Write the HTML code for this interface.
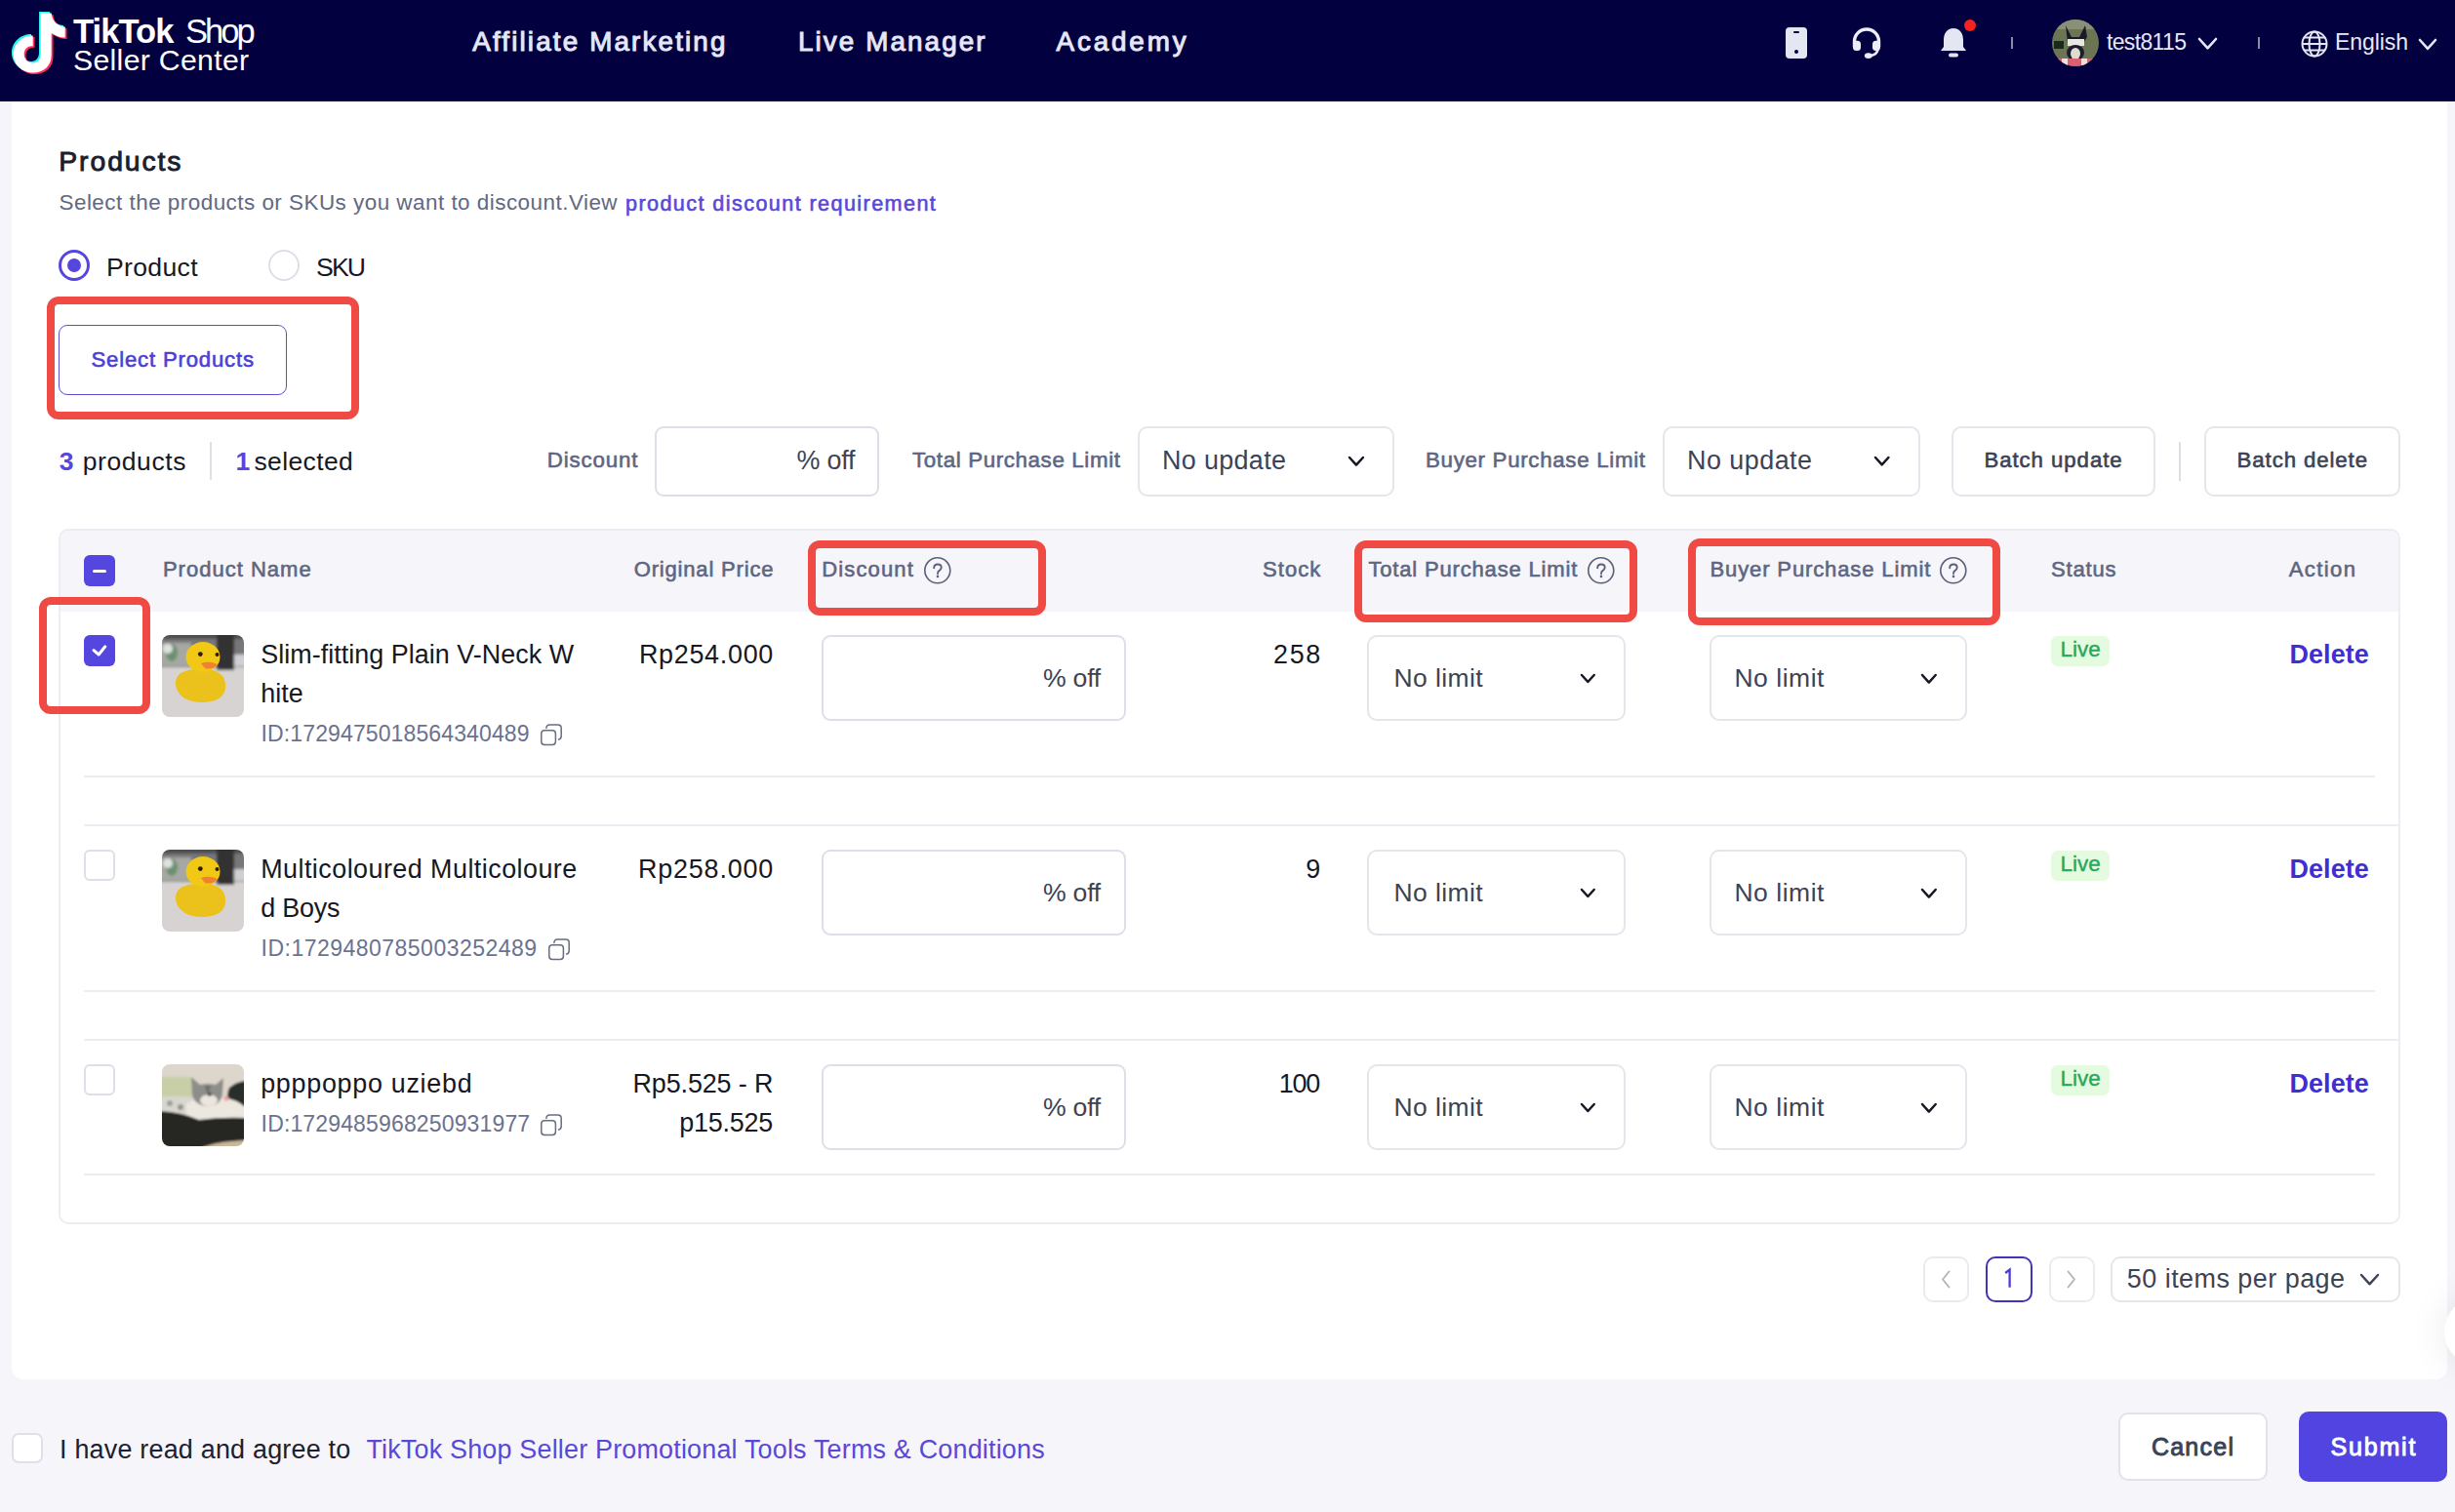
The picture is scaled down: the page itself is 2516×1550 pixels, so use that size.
<!DOCTYPE html>
<html><head><meta charset="utf-8">
<style>
html,body{margin:0;padding:0;}
body{width:2516px;height:1550px;overflow:hidden;background:#f6f6fa;position:relative;font-family:"Liberation Sans",sans-serif;}
.a{position:absolute;box-sizing:border-box;}
.t{position:absolute;white-space:pre;}
.hdr{left:0;top:0;width:2516px;height:104px;background:#03003f;}
.card{left:12px;top:104px;width:2496px;height:1310px;background:#fff;border-radius:0 0 12px 12px;}
.redbox{border:8px solid #f04a44;border-radius:12px;}
.inp{border:2px solid #dcdfe8;border-radius:9px;background:#fff;}
.sel{border:2px solid #e4e6ec;border-radius:10px;background:#fff;}
.btn{border:2px solid #e4e6ec;border-radius:10px;background:#fff;}
.div{background:#ebedf2;height:2px;}
.cb{width:32px;height:32px;border:2px solid #dcdfe8;border-radius:6px;background:#fff;}
.cbon{width:32px;height:32px;border-radius:6px;background:#5546e0;}
.img{width:84px;height:84px;border-radius:8px;overflow:hidden;}
</style></head><body>
<div class="a hdr"></div>
<div class="a card"></div>
<svg class="a" style="left:8px;top:10px" width="62" height="70" viewBox="0 0 62 70">
<g transform="translate(2,2)">
<path d="M30 0 H41 C41.5 7 46 13 55 14 V25 C49 25 45 23 41 20.5 V43 C41 54 33 61 22 61 C11 61 2 53 2 42 C2 31 11 23 22 23 V34 C17 33 13 37 13 42 C13 47 17 51 22 51 C27 51 30 47 30 42 Z" fill="#25f4ee"/>
</g>
<g transform="translate(5.5,5)">
<path d="M30 0 H41 C41.5 7 46 13 55 14 V25 C49 25 45 23 41 20.5 V43 C41 54 33 61 22 61 C11 61 2 53 2 42 C2 31 11 23 22 23 V34 C17 33 13 37 13 42 C13 47 17 51 22 51 C27 51 30 47 30 42 Z" fill="#fe2c55"/>
</g>
<g transform="translate(3.7,3.5)">
<path d="M30 0 H41 C41.5 7 46 13 55 14 V25 C49 25 45 23 41 20.5 V43 C41 54 33 61 22 61 C11 61 2 53 2 42 C2 31 11 23 22 23 V34 C17 33 13 37 13 42 C13 47 17 51 22 51 C27 51 30 47 30 42 Z" fill="#ffffff"/>
</g></svg>
<div class="a " style="left:1830px;top:28px;width:22px;height:32px;background:#e4e6f2;border-radius:4px;"></div>
<div class="a " style="left:1838px;top:32px;width:6px;height:2px;background:#03003f;border-radius:1px;"></div>
<div class="a " style="left:1839px;top:51px;width:4px;height:4px;background:#03003f;border-radius:50%;"></div>
<svg class="a" style="left:1897px;top:26px" width="32" height="36" viewBox="0 0 32 36">
<path d="M3.5 22 V16.5 A12.5 12.5 0 0 1 28.5 16.5 V22" fill="none" stroke="#ecedf8" stroke-width="3.4"/>
<rect x="2" y="15.7" width="8" height="10.4" rx="3.5" fill="#ecedf8"/>
<rect x="22" y="15.7" width="8" height="10.4" rx="3.5" fill="#ecedf8"/>
<path d="M27.5 24 Q27.5 30 19 31.2" fill="none" stroke="#ecedf8" stroke-width="2.6"/>
<ellipse cx="17.8" cy="31.1" rx="4" ry="2.9" fill="#ecedf8"/>
</svg>
<svg class="a" style="left:1986px;top:26px" width="32" height="36" viewBox="0 0 32 36">
<path d="M16 3 C9 3 6 9 6 15 V22 L3 26 H29 L26 22 V15 C26 9 23 3 16 3 Z" fill="#e4e6f2"/>
<rect x="11" y="28.5" width="10" height="4" rx="2" fill="#e4e6f2"/>
</svg>
<div class="a " style="left:2013px;top:20px;width:12px;height:12px;background:#f52222;border-radius:50%;"></div>
<div class="a " style="left:2061px;top:38px;width:2px;height:12px;background:#8b8ba8;"></div>
<div class="a " style="left:2314px;top:38px;width:2px;height:12px;background:#8b8ba8;"></div>
<svg class="a" style="left:2103px;top:20px" width="48" height="48" viewBox="0 0 48 48">
<defs><clipPath id="av"><circle cx="24" cy="24" r="24"/></clipPath></defs>
<g clip-path="url(#av)">
<rect width="48" height="48" fill="#6b7553"/>
<rect x="0" y="0" width="48" height="10" fill="#8a9078"/>
<path d="M14 6 L20 18 L28 18 L34 6 L36 18 L32 24 L16 24 Z" fill="#1a1a2a"/>
<rect x="2" y="22" width="10" height="8" fill="#1a2a1a"/>
<rect x="16" y="20" width="17" height="7" fill="#e8e8e0"/>
<ellipse cx="24" cy="34" rx="9" ry="8" fill="#1c1c30"/>
<ellipse cx="24" cy="35" rx="5" ry="6" fill="#e0dccd"/>
<rect x="0" y="40" width="48" height="8" fill="#d86070"/>
<rect x="10" y="40" width="6" height="8" fill="#f0e0e0"/>
<rect x="30" y="40" width="6" height="8" fill="#f0e0e0"/>
</g></svg>
<svg class="a" style="left:2251px;top:37.325px" width="23" height="15.350000000000001"><polyline points="3,3 11.5,12.350000000000001 20,3" fill="none" stroke="#e6e8f7" stroke-width="2.6" stroke-linecap="round" stroke-linejoin="round"/></svg>
<svg class="a" style="left:2357px;top:30px" width="30" height="30" viewBox="0 0 30 30">
<g fill="none" stroke="#e4e6f2" stroke-width="2">
<circle cx="15" cy="15" r="12.5"/><ellipse cx="15" cy="15" rx="5.5" ry="12.5"/>
<line x1="2.5" y1="15" x2="27.5" y2="15"/><path d="M4.5 8.5 H25.5 M4.5 21.5 H25.5"/>
</g></svg>
<svg class="a" style="left:2477px;top:37.6px" width="22" height="14.8"><polyline points="3,3 11.0,11.8 19,3" fill="none" stroke="#e6e8f7" stroke-width="2.6" stroke-linecap="round" stroke-linejoin="round"/></svg>
<div class="a " style="left:60px;top:256px;width:32px;height:32px;border:3px solid #5546e0;border-radius:50%;"></div>
<div class="a " style="left:69px;top:265px;width:14px;height:14px;background:#5546e0;border-radius:50%;"></div>
<div class="a " style="left:275px;top:256px;width:32px;height:32px;border:2px solid #dcdfe8;border-radius:50%;"></div>
<div class="a redbox" style="left:48px;top:304px;width:320px;height:126px;"></div>
<div class="a " style="left:60px;top:333px;width:234px;height:72px;border:1.5px solid #5b4fcf;border-radius:9px;"></div>
<div class="a " style="left:215px;top:453px;width:2px;height:39px;background:#dcdfe6;"></div>
<div class="a inp" style="left:671px;top:437px;width:230px;height:72px;"></div>
<div class="a sel" style="left:1166px;top:437px;width:263px;height:72px;"></div>
<svg class="a" style="left:1380.3px;top:466.17749999999995px" width="19.90000000000009" height="13.64500000000005"><polyline points="3,3 9.950000000000045,10.64500000000005 16.90000000000009,3" fill="none" stroke="#161823" stroke-width="2.5" stroke-linecap="round" stroke-linejoin="round"/></svg>
<div class="a sel" style="left:1704px;top:437px;width:264px;height:72px;"></div>
<svg class="a" style="left:1919.3px;top:466.315px" width="19.40000000000009" height="13.37000000000005"><polyline points="3,3 9.700000000000045,10.37000000000005 16.40000000000009,3" fill="none" stroke="#161823" stroke-width="2.5" stroke-linecap="round" stroke-linejoin="round"/></svg>
<div class="a btn" style="left:2000px;top:437px;width:209px;height:72px;"></div>
<div class="a " style="left:2233px;top:453px;width:2px;height:40px;background:#dcdfe6;"></div>
<div class="a btn" style="left:2259px;top:437px;width:201px;height:72px;"></div>
<div class="a " style="left:60px;top:542px;width:2400px;height:713px;border:2px solid #ebedf2;border-radius:10px;overflow:hidden;"></div>
<div class="a " style="left:62px;top:544px;width:2396px;height:83px;background:#f5f5fa;border-radius:8px 8px 0 0;"></div>
<div class="a cbon" style="left:86px;top:569px;width:32px;height:32px;"></div>
<div class="a " style="left:95px;top:583.5px;width:14px;height:3.0px;background:#fff;border-radius:2px;"></div>
<svg class="a" style="left:945.2px;top:569.0px" width="31.6" height="31.6" viewBox="-15.8 -15.8 31.6 31.6"><circle cx="0" cy="0" r="13.0" fill="none" stroke="#5a6078" stroke-width="1.6"/><path d="M-3.6 -2.6 Q-3.6 -6.3 0.2 -6.3 Q3.9 -6.3 3.9 -3.1 Q3.9 -1.1 1.6 0.3 Q0.2 1.2 0.2 3.2" fill="none" stroke="#5a6078" stroke-width="1.9" stroke-linecap="round"/><circle cx="0.2" cy="6.1" r="1.3" fill="#5a6078"/></svg>
<svg class="a" style="left:1625.2px;top:569.2px" width="31.6" height="31.6" viewBox="-15.8 -15.8 31.6 31.6"><circle cx="0" cy="0" r="13.0" fill="none" stroke="#5a6078" stroke-width="1.6"/><path d="M-3.6 -2.6 Q-3.6 -6.3 0.2 -6.3 Q3.9 -6.3 3.9 -3.1 Q3.9 -1.1 1.6 0.3 Q0.2 1.2 0.2 3.2" fill="none" stroke="#5a6078" stroke-width="1.9" stroke-linecap="round"/><circle cx="0.2" cy="6.1" r="1.3" fill="#5a6078"/></svg>
<svg class="a" style="left:1986.2px;top:569.2px" width="31.6" height="31.6" viewBox="-15.8 -15.8 31.6 31.6"><circle cx="0" cy="0" r="13.0" fill="none" stroke="#5a6078" stroke-width="1.6"/><path d="M-3.6 -2.6 Q-3.6 -6.3 0.2 -6.3 Q3.9 -6.3 3.9 -3.1 Q3.9 -1.1 1.6 0.3 Q0.2 1.2 0.2 3.2" fill="none" stroke="#5a6078" stroke-width="1.9" stroke-linecap="round"/><circle cx="0.2" cy="6.1" r="1.3" fill="#5a6078"/></svg>
<div class="a cbon" style="left:86px;top:651px;width:32px;height:32px;"></div>
<svg class="a" style="left:86px;top:651px" width="32" height="32"><polyline points="10,15.6 15.2,20 21.8,11.8" fill="none" stroke="#fff" stroke-width="3" stroke-linecap="round" stroke-linejoin="round"/></svg>
<svg class="a" style="left:166px;top:651px" width="84" height="84" viewBox="0 0 84 84"><defs><clipPath id="cd0"><rect width="84" height="84" rx="8"/></clipPath><filter id="fd0" x="-10%" y="-10%" width="120%" height="120%"><feGaussianBlur stdDeviation="1.6"/></filter><filter id="fe0" x="-10%" y="-10%" width="120%" height="120%"><feGaussianBlur stdDeviation="0.5"/></filter></defs><g clip-path="url(#cd0)"><g filter="url(#fd0)"><rect x="-4" y="-4" width="92" height="92" fill="#d8d3d3"/><rect x="-4" y="-4" width="92" height="37" fill="#77777a"/><rect x="-4" y="-4" width="92" height="8" fill="#4e4e50"/><rect x="-4" y="8" width="34" height="24" fill="#a6a8a3"/><ellipse cx="10" cy="18" rx="6" ry="9" fill="#6a9070"/><ellipse cx="6" cy="14" rx="5" ry="5" fill="#e0e2e0"/><rect x="56" y="-4" width="18" height="40" fill="#313133"/><rect x="74" y="20" width="12" height="12" fill="#d0d0d4"/></g><g filter="url(#fe0)"><path d="M14 52 Q13 40 24 37 Q30 34 36 36 L52 36 Q66 40 65 54 Q64 68 42 69 Q18 69 14 52 Z" fill="#ebc21e"/><ellipse cx="42" cy="22.5" rx="17.5" ry="15.5" fill="#f1c812"/><path d="M40 29 Q48 26 57 30 Q52 36 44 34 Z" fill="#f08030"/><circle cx="39.3" cy="19.6" r="2.4" fill="#2a1a0a"/><circle cx="56.5" cy="20" r="2" fill="#2a1a0a"/></g></g></svg>
<div class="a inp" style="left:842px;top:651px;width:312px;height:88px;"></div>
<div class="a sel" style="left:1401px;top:651px;width:265px;height:88px;"></div>
<svg class="a" style="left:1618.3px;top:689.0074999999999px" width="18.700000000000045" height="12.985000000000024"><polyline points="3,3 9.350000000000023,9.985000000000024 15.700000000000045,3" fill="none" stroke="#161823" stroke-width="2.5" stroke-linecap="round" stroke-linejoin="round"/></svg>
<div class="a sel" style="left:1752px;top:651px;width:264px;height:88px;"></div>
<svg class="a" style="left:1966.8px;top:688.7325px" width="19.700000000000045" height="13.535000000000025"><polyline points="3,3 9.850000000000023,10.535000000000025 16.700000000000045,3" fill="none" stroke="#161823" stroke-width="2.5" stroke-linecap="round" stroke-linejoin="round"/></svg>
<div class="a " style="left:2102px;top:651.5px;width:60px;height:31.0px;background:#e5fbdf;border-radius:7px;"></div>
<div class="a cb" style="left:86px;top:871px;width:32px;height:32px;"></div>
<svg class="a" style="left:166px;top:871px" width="84" height="84" viewBox="0 0 84 84"><defs><clipPath id="cd1"><rect width="84" height="84" rx="8"/></clipPath><filter id="fd1" x="-10%" y="-10%" width="120%" height="120%"><feGaussianBlur stdDeviation="1.6"/></filter><filter id="fe1" x="-10%" y="-10%" width="120%" height="120%"><feGaussianBlur stdDeviation="0.5"/></filter></defs><g clip-path="url(#cd1)"><g filter="url(#fd1)"><rect x="-4" y="-4" width="92" height="92" fill="#d8d3d3"/><rect x="-4" y="-4" width="92" height="37" fill="#77777a"/><rect x="-4" y="-4" width="92" height="8" fill="#4e4e50"/><rect x="-4" y="8" width="34" height="24" fill="#a6a8a3"/><ellipse cx="10" cy="18" rx="6" ry="9" fill="#6a9070"/><ellipse cx="6" cy="14" rx="5" ry="5" fill="#e0e2e0"/><rect x="56" y="-4" width="18" height="40" fill="#313133"/><rect x="74" y="20" width="12" height="12" fill="#d0d0d4"/></g><g filter="url(#fe1)"><path d="M14 52 Q13 40 24 37 Q30 34 36 36 L52 36 Q66 40 65 54 Q64 68 42 69 Q18 69 14 52 Z" fill="#ebc21e"/><ellipse cx="42" cy="22.5" rx="17.5" ry="15.5" fill="#f1c812"/><path d="M40 29 Q48 26 57 30 Q52 36 44 34 Z" fill="#f08030"/><circle cx="39.3" cy="19.6" r="2.4" fill="#2a1a0a"/><circle cx="56.5" cy="20" r="2" fill="#2a1a0a"/></g></g></svg>
<div class="a inp" style="left:842px;top:871px;width:312px;height:88px;"></div>
<div class="a sel" style="left:1401px;top:871px;width:265px;height:88px;"></div>
<svg class="a" style="left:1618.3px;top:909.0074999999999px" width="18.700000000000045" height="12.985000000000024"><polyline points="3,3 9.350000000000023,9.985000000000024 15.700000000000045,3" fill="none" stroke="#161823" stroke-width="2.5" stroke-linecap="round" stroke-linejoin="round"/></svg>
<div class="a sel" style="left:1752px;top:871px;width:264px;height:88px;"></div>
<svg class="a" style="left:1966.8px;top:908.7325px" width="19.700000000000045" height="13.535000000000025"><polyline points="3,3 9.850000000000023,10.535000000000025 16.700000000000045,3" fill="none" stroke="#161823" stroke-width="2.5" stroke-linecap="round" stroke-linejoin="round"/></svg>
<div class="a " style="left:2102px;top:871.5px;width:60px;height:31.0px;background:#e5fbdf;border-radius:7px;"></div>
<div class="a cb" style="left:86px;top:1091px;width:32px;height:32px;"></div>
<svg class="a" style="left:166px;top:1091px" width="84" height="84" viewBox="0 0 84 84"><defs><clipPath id="c2"><rect width="84" height="84" rx="8"/></clipPath><filter id="bl" x="-10%" y="-10%" width="120%" height="120%"><feGaussianBlur stdDeviation="0.8"/></filter></defs><g clip-path="url(#c2)"><g filter="url(#bl)"><rect x="-2" y="-2" width="88" height="88" fill="#ddd6cc"/><rect x="-2" y="13" width="33" height="21" fill="#c8cfa6"/><rect x="-2" y="33" width="31" height="16" fill="#d8d6cf"/><circle cx="8" cy="40" r="3" fill="#9aa29a"/><circle cx="19" cy="44" r="3" fill="#8f968f"/><path d="M69 24 Q76 18 86 17 L86 43 L67 43 Q66 30 69 24 Z" fill="#2c2e2b"/><path d="M25 40 Q40 32 60 34 Q80 36 86 46 L86 60 L25 58 Z" fill="#ece7df"/><path d="M30 13 L39 21 Q47 19 55 21 L63 14 L62 30 Q61 42 47 43 Q33 42 31 31 Z" fill="#8d8d89"/><ellipse cx="48" cy="37" rx="9" ry="6" fill="#ebe6dd"/><path d="M44 22 L47 33 L50 22 Z" fill="#6f706c"/><circle cx="49" cy="31" r="1.8" fill="#3a2a2a"/><circle cx="66" cy="35" r="2.5" fill="#e8a0a8"/><path d="M-2 48 Q20 49 38 57 Q60 54 86 55 L86 86 L-2 86 Z" fill="#262620"/><path d="M40 86 Q55 79 86 78 L86 86 Z" fill="#c9b79c"/></g></g></svg>
<div class="a inp" style="left:842px;top:1091px;width:312px;height:88px;"></div>
<div class="a sel" style="left:1401px;top:1091px;width:265px;height:88px;"></div>
<svg class="a" style="left:1618.3px;top:1129.0075px" width="18.700000000000045" height="12.985000000000024"><polyline points="3,3 9.350000000000023,9.985000000000024 15.700000000000045,3" fill="none" stroke="#161823" stroke-width="2.5" stroke-linecap="round" stroke-linejoin="round"/></svg>
<div class="a sel" style="left:1752px;top:1091px;width:264px;height:88px;"></div>
<svg class="a" style="left:1966.8px;top:1128.7325px" width="19.700000000000045" height="13.535000000000025"><polyline points="3,3 9.850000000000023,10.535000000000025 16.700000000000045,3" fill="none" stroke="#161823" stroke-width="2.5" stroke-linecap="round" stroke-linejoin="round"/></svg>
<div class="a " style="left:2102px;top:1091.5px;width:60px;height:31.0px;background:#e5fbdf;border-radius:7px;"></div>
<svg class="a" style="left:552px;top:742px" width="26" height="24" viewBox="0 0 26 24"><rect x="2.8" y="6.7" width="14.6" height="14.8" rx="3.2" fill="none" stroke="#676d80" stroke-width="1.5"/><path d="M7.9 4.5 Q7.9 1.1 11.3 1.1 H19.8 Q23.2 1.1 23.2 4.5 V12.5 Q23.2 15.9 20.5 15.9" fill="none" stroke="#676d80" stroke-width="1.5" stroke-linecap="round"/></svg>
<svg class="a" style="left:560px;top:962px" width="26" height="24" viewBox="0 0 26 24"><rect x="2.8" y="6.7" width="14.6" height="14.8" rx="3.2" fill="none" stroke="#676d80" stroke-width="1.5"/><path d="M7.9 4.5 Q7.9 1.1 11.3 1.1 H19.8 Q23.2 1.1 23.2 4.5 V12.5 Q23.2 15.9 20.5 15.9" fill="none" stroke="#676d80" stroke-width="1.5" stroke-linecap="round"/></svg>
<svg class="a" style="left:552px;top:1142px" width="26" height="24" viewBox="0 0 26 24"><rect x="2.8" y="6.7" width="14.6" height="14.8" rx="3.2" fill="none" stroke="#676d80" stroke-width="1.5"/><path d="M7.9 4.5 Q7.9 1.1 11.3 1.1 H19.8 Q23.2 1.1 23.2 4.5 V12.5 Q23.2 15.9 20.5 15.9" fill="none" stroke="#676d80" stroke-width="1.5" stroke-linecap="round"/></svg>
<div class="a div" style="left:86px;top:795px;width:2348px;height:2px;"></div>
<div class="a div" style="left:86px;top:1015px;width:2348px;height:2px;"></div>
<div class="a div" style="left:86px;top:1203px;width:2348px;height:2px;"></div>
<div class="a div" style="left:86px;top:845px;width:2372px;height:2px;"></div>
<div class="a div" style="left:86px;top:1065px;width:2372px;height:2px;"></div>
<div class="a redbox" style="left:40px;top:612px;width:114px;height:120px;"></div>
<div class="a redbox" style="left:828px;top:554px;width:244px;height:77px;"></div>
<div class="a redbox" style="left:1388px;top:554px;width:290px;height:84px;"></div>
<div class="a redbox" style="left:1730px;top:552px;width:320px;height:89px;"></div>
<div class="a " style="left:1971px;top:1288px;width:47px;height:47px;border:2px solid #e9ebf0;border-radius:10px;background:#fff;"></div>

<svg class="a" style="left:1986px;top:1300px" width="16" height="24"><polyline points="11.5,3.5 5,11.5 11.5,19.5" fill="none" stroke="#aeb2bd" stroke-width="1.8" stroke-linecap="round" stroke-linejoin="round"/></svg>
<div class="a " style="left:2035px;top:1288px;width:48px;height:47px;border:2.5px solid #4234b8;border-radius:10px;"></div>
<svg class="a" style="left:2050px;top:1298px" width="20" height="26"><path d="M5.2 7 L9.6 3.6 V21.8" fill="none" stroke="#4b3bd6" stroke-width="2.3" stroke-linejoin="miter"/></svg>
<div class="a " style="left:2100px;top:1288px;width:47px;height:47px;border:2px solid #e9ebf0;border-radius:10px;background:#fff;"></div>
<svg class="a" style="left:2115px;top:1300px" width="16" height="24"><polyline points="4.5,3.5 11,11.5 4.5,19.5" fill="none" stroke="#aeb2bd" stroke-width="1.8" stroke-linecap="round" stroke-linejoin="round"/></svg>
<div class="a sel" style="left:2163px;top:1288px;width:297px;height:47px;"></div>
<svg class="a" style="left:2417px;top:1304.325px" width="23" height="15.350000000000001"><polyline points="3,3 11.5,12.350000000000001 20,3" fill="none" stroke="#3d4356" stroke-width="2.4" stroke-linecap="round" stroke-linejoin="round"/></svg>
<div class="a " style="left:12px;top:1469px;width:32px;height:31px;border:2px solid #dfe1e9;border-radius:7px;background:#fff;"></div>
<div class="a " style="left:2171px;top:1448px;width:153px;height:70px;border:2px solid #e0e3ea;border-radius:10px;background:#fff;"></div>
<div class="a " style="left:2356px;top:1447px;width:152px;height:72px;background:#5244e0;border-radius:10px;"></div>
<div class="a " style="left:2505px;top:1330px;width:70px;height:70px;background:#fff;border-radius:50%;box-shadow:0 0 40px rgba(0,0,0,0.09);"></div>
<div class="t" style="top:14.7px;font-size:34.53px;line-height:34.53px;font-weight:700;color:#ffffff;letter-spacing:-0.92px;left:75.0px;">TikTok</div>
<div class="t" style="top:14.7px;font-size:34.53px;line-height:34.53px;font-weight:400;color:#ffffff;letter-spacing:-2.98px;left:190.0px;">Shop</div>
<div class="t" style="top:47.4px;font-size:30.22px;line-height:30.22px;font-weight:400;color:#ffffff;letter-spacing:0.31px;left:75.0px;">Seller Center</div>
<div class="t" style="top:29.1px;font-size:27.77px;line-height:27.77px;font-weight:400;color:#e6e8f7;-webkit-text-stroke:1.0px #e6e8f7;letter-spacing:2.17px;left:484.2px;">Affiliate Marketing</div>
<div class="t" style="top:29.1px;font-size:27.77px;line-height:27.77px;font-weight:400;color:#e6e8f7;-webkit-text-stroke:1.0px #e6e8f7;letter-spacing:2.13px;left:817.9px;">Live Manager</div>
<div class="t" style="top:29.1px;font-size:27.77px;line-height:27.77px;font-weight:400;color:#e6e8f7;-webkit-text-stroke:1.0px #e6e8f7;letter-spacing:2.87px;left:1082.6px;">Academy</div>
<div class="t" style="top:31.5px;font-size:23.02px;line-height:23.02px;font-weight:400;color:#e6e8f7;letter-spacing:-0.66px;left:2159.0px;">test8115</div>
<div class="t" style="top:31.5px;font-size:23.02px;line-height:23.02px;font-weight:400;color:#e6e8f7;letter-spacing:-0.08px;left:2393.0px;">English</div>
<div class="t" style="top:151.4px;font-size:28.35px;line-height:28.35px;font-weight:400;color:#1c1e2b;-webkit-text-stroke:0.9px #1c1e2b;letter-spacing:1.91px;left:60.3px;">Products</div>
<div class="t" style="top:197.0px;font-size:22.45px;line-height:22.45px;font-weight:400;color:#626882;letter-spacing:0.48px;left:60.5px;">Select the products or SKUs you want to discount.View</div>
<div class="t" style="top:197.7px;font-size:21.58px;line-height:21.58px;font-weight:400;color:#5a48d8;-webkit-text-stroke:0.6px #5a48d8;letter-spacing:1.42px;left:641.0px;">product discount requirement</div>
<div class="t" style="top:260.5px;font-size:26.62px;line-height:26.62px;font-weight:400;color:#161823;letter-spacing:0.34px;left:108.9px;">Product</div>
<div class="t" style="top:260.5px;font-size:26.62px;line-height:26.62px;font-weight:400;color:#161823;letter-spacing:-1.87px;left:324.0px;">SKU</div>
<div class="t" style="top:358.2px;font-size:22.16px;line-height:22.16px;font-weight:400;color:#4c3fd6;-webkit-text-stroke:0.6px #4c3fd6;letter-spacing:0.81px;left:93.5px;">Select Products</div>
<div class="t" style="top:459.5px;font-size:26.47px;line-height:26.47px;font-weight:700;color:#5546e0;left:60.8px;">3</div>
<div class="t" style="top:459.5px;font-size:26.47px;line-height:26.47px;font-weight:400;color:#161823;letter-spacing:0.61px;left:84.7px;">products</div>
<div class="t" style="top:459.5px;font-size:26.47px;line-height:26.47px;font-weight:700;color:#5546e0;left:241.5px;">1</div>
<div class="t" style="top:459.5px;font-size:26.47px;line-height:26.47px;font-weight:400;color:#161823;letter-spacing:0.40px;left:260.4px;">selected</div>
<div class="t" style="top:461.4px;font-size:22.30px;line-height:22.30px;font-weight:400;color:#5e6682;-webkit-text-stroke:0.6px #5e6682;letter-spacing:0.85px;left:560.7px;">Discount</div>
<div class="t" style="top:459.0px;font-size:26.91px;line-height:26.91px;font-weight:400;color:#3d4356;letter-spacing:-0.23px;left:816.6px;">% off</div>
<div class="t" style="top:461.4px;font-size:22.30px;line-height:22.30px;font-weight:400;color:#5e6682;-webkit-text-stroke:0.6px #5e6682;letter-spacing:0.64px;left:935.0px;">Total Purchase Limit</div>
<div class="t" style="top:459.0px;font-size:26.91px;line-height:26.91px;font-weight:400;color:#3d4356;letter-spacing:0.35px;left:1191.0px;">No update</div>
<div class="t" style="top:461.4px;font-size:22.30px;line-height:22.30px;font-weight:400;color:#5e6682;-webkit-text-stroke:0.6px #5e6682;letter-spacing:0.69px;left:1461.0px;">Buyer Purchase Limit</div>
<div class="t" style="top:459.0px;font-size:26.91px;line-height:26.91px;font-weight:400;color:#3d4356;letter-spacing:0.48px;left:1729.0px;">No update</div>
<div class="t" style="top:461.4px;font-size:22.16px;line-height:22.16px;font-weight:400;color:#3b4256;-webkit-text-stroke:0.6px #3b4256;letter-spacing:0.97px;left:2033.4px;">Batch update</div>
<div class="t" style="top:461.4px;font-size:22.16px;line-height:22.16px;font-weight:400;color:#3b4256;-webkit-text-stroke:0.6px #3b4256;letter-spacing:0.93px;left:2292.6px;">Batch delete</div>
<div class="t" style="top:573.3px;font-size:22.01px;line-height:22.01px;font-weight:400;color:#5e6682;-webkit-text-stroke:0.6px #5e6682;letter-spacing:1.01px;left:166.9px;">Product Name</div>
<div class="t" style="top:573.3px;font-size:22.01px;line-height:22.01px;font-weight:400;color:#5e6682;-webkit-text-stroke:0.6px #5e6682;letter-spacing:0.83px;left:649.7px;">Original Price</div>
<div class="t" style="top:573.3px;font-size:22.01px;line-height:22.01px;font-weight:400;color:#5e6682;-webkit-text-stroke:0.6px #5e6682;letter-spacing:1.14px;left:842.2px;">Discount</div>
<div class="t" style="top:573.3px;font-size:22.01px;line-height:22.01px;font-weight:400;color:#5e6682;-webkit-text-stroke:0.6px #5e6682;letter-spacing:1.06px;left:1294.0px;">Stock</div>
<div class="t" style="top:573.3px;font-size:22.01px;line-height:22.01px;font-weight:400;color:#5e6682;-webkit-text-stroke:0.6px #5e6682;letter-spacing:0.83px;left:1402.4px;">Total Purchase Limit</div>
<div class="t" style="top:573.3px;font-size:22.01px;line-height:22.01px;font-weight:400;color:#5e6682;-webkit-text-stroke:0.6px #5e6682;letter-spacing:0.88px;left:1752.5px;">Buyer Purchase Limit</div>
<div class="t" style="top:573.3px;font-size:22.01px;line-height:22.01px;font-weight:400;color:#5e6682;-webkit-text-stroke:0.6px #5e6682;letter-spacing:0.84px;left:2102.0px;">Status</div>
<div class="t" style="top:573.3px;font-size:22.01px;line-height:22.01px;font-weight:400;color:#5e6682;-webkit-text-stroke:0.6px #5e6682;letter-spacing:1.42px;left:2345.7px;">Action</div>
<div class="t" style="top:658.2px;font-size:26.91px;line-height:26.91px;font-weight:400;color:#161823;letter-spacing:0.04px;left:267.2px;">Slim-fitting Plain V-Neck W</div>
<div class="t" style="top:698.0px;font-size:26.91px;line-height:26.91px;font-weight:400;color:#161823;letter-spacing:0.01px;left:267.2px;">hite</div>
<div class="t" style="top:741.1px;font-size:23.02px;line-height:23.02px;font-weight:400;color:#6b7290;letter-spacing:0.11px;left:267.6px;">ID:1729475018564340489</div>
<div class="t" style="top:658.2px;font-size:26.91px;line-height:26.91px;font-weight:400;color:#161823;letter-spacing:0.71px;right:1723.0px;">Rp254.000</div>
<div class="t" style="top:681.7px;font-size:26.62px;line-height:26.62px;font-weight:400;color:#3d4356;letter-spacing:-0.27px;right:1388.1px;">% off</div>
<div class="t" style="top:658.2px;font-size:26.91px;line-height:26.91px;font-weight:400;color:#161823;letter-spacing:1.70px;right:1161.0px;">258</div>
<div class="t" style="top:681.8px;font-size:26.47px;line-height:26.47px;font-weight:400;color:#3d4356;letter-spacing:0.41px;left:1428.6px;">No limit</div>
<div class="t" style="top:681.8px;font-size:26.47px;line-height:26.47px;font-weight:400;color:#3d4356;letter-spacing:0.55px;left:1777.4px;">No limit</div>
<div class="t" style="top:654.9px;font-size:22.45px;line-height:22.45px;font-weight:400;color:#27a85e;-webkit-text-stroke:0.4px #27a85e;letter-spacing:-0.03px;left:2111.6px;">Live</div>
<div class="t" style="top:657.8px;font-size:26.91px;line-height:26.91px;font-weight:700;color:#3f2fd2;letter-spacing:0.13px;left:2346.4px;">Delete</div>
<div class="t" style="top:878.2px;font-size:26.91px;line-height:26.91px;font-weight:400;color:#161823;letter-spacing:0.46px;left:267.2px;">Multicoloured Multicoloure</div>
<div class="t" style="top:918.0px;font-size:26.91px;line-height:26.91px;font-weight:400;color:#161823;letter-spacing:-0.21px;left:267.2px;">d Boys</div>
<div class="t" style="top:961.1px;font-size:23.02px;line-height:23.02px;font-weight:400;color:#6b7290;letter-spacing:0.47px;left:267.6px;">ID:1729480785003252489</div>
<div class="t" style="top:878.2px;font-size:26.91px;line-height:26.91px;font-weight:400;color:#161823;letter-spacing:0.84px;right:1722.9px;">Rp258.000</div>
<div class="t" style="top:901.7px;font-size:26.62px;line-height:26.62px;font-weight:400;color:#3d4356;letter-spacing:-0.27px;right:1388.1px;">% off</div>
<div class="t" style="top:878.2px;font-size:26.91px;line-height:26.91px;font-weight:400;color:#161823;right:1162.7px;">9</div>
<div class="t" style="top:901.8px;font-size:26.47px;line-height:26.47px;font-weight:400;color:#3d4356;letter-spacing:0.41px;left:1428.6px;">No limit</div>
<div class="t" style="top:901.8px;font-size:26.47px;line-height:26.47px;font-weight:400;color:#3d4356;letter-spacing:0.55px;left:1777.4px;">No limit</div>
<div class="t" style="top:874.9px;font-size:22.45px;line-height:22.45px;font-weight:400;color:#27a85e;-webkit-text-stroke:0.4px #27a85e;letter-spacing:-0.03px;left:2111.6px;">Live</div>
<div class="t" style="top:877.8px;font-size:26.91px;line-height:26.91px;font-weight:700;color:#3f2fd2;letter-spacing:0.13px;left:2346.4px;">Delete</div>
<div class="t" style="top:1098.2px;font-size:26.91px;line-height:26.91px;font-weight:400;color:#161823;letter-spacing:0.71px;left:267.2px;">ppppoppo uziebd</div>
<div class="t" style="top:1141.3px;font-size:23.02px;line-height:23.02px;font-weight:400;color:#6b7290;letter-spacing:0.14px;left:267.6px;">ID:1729485968250931977</div>
<div class="t" style="top:1098.2px;font-size:26.91px;line-height:26.91px;font-weight:400;color:#161823;letter-spacing:-0.13px;right:1723.8px;">Rp5.525 - R</div>
<div class="t" style="top:1138.0px;font-size:26.91px;line-height:26.91px;font-weight:400;color:#161823;letter-spacing:-0.21px;right:1723.9px;">p15.525</div>
<div class="t" style="top:1121.7px;font-size:26.62px;line-height:26.62px;font-weight:400;color:#3d4356;letter-spacing:-0.27px;right:1388.1px;">% off</div>
<div class="t" style="top:1098.2px;font-size:26.91px;line-height:26.91px;font-weight:400;color:#161823;letter-spacing:-1.20px;right:1163.9px;">100</div>
<div class="t" style="top:1121.8px;font-size:26.47px;line-height:26.47px;font-weight:400;color:#3d4356;letter-spacing:0.41px;left:1428.6px;">No limit</div>
<div class="t" style="top:1121.8px;font-size:26.47px;line-height:26.47px;font-weight:400;color:#3d4356;letter-spacing:0.55px;left:1777.4px;">No limit</div>
<div class="t" style="top:1094.9px;font-size:22.45px;line-height:22.45px;font-weight:400;color:#27a85e;-webkit-text-stroke:0.4px #27a85e;letter-spacing:-0.03px;left:2111.6px;">Live</div>
<div class="t" style="top:1097.8px;font-size:26.91px;line-height:26.91px;font-weight:700;color:#3f2fd2;letter-spacing:0.13px;left:2346.4px;">Delete</div>
<div class="t" style="top:1297.5px;font-size:26.91px;line-height:26.91px;font-weight:400;color:#3d4356;letter-spacing:0.49px;left:2179.8px;">50 items per page</div>
<div class="t" style="top:1473.0px;font-size:26.91px;line-height:26.91px;font-weight:400;color:#1e2030;letter-spacing:0.22px;left:61.0px;">I have read and agree to</div>
<div class="t" style="top:1473.0px;font-size:26.91px;line-height:26.91px;font-weight:400;color:#5a48d8;letter-spacing:0.20px;left:375.4px;">TikTok Shop Seller Promotional Tools Terms &amp; Conditions</div>
<div class="t" style="top:1470.7px;font-size:25.04px;line-height:25.04px;font-weight:400;color:#3b4256;-webkit-text-stroke:0.9px #3b4256;letter-spacing:1.23px;left:2204.9px;">Cancel</div>
<div class="t" style="top:1470.7px;font-size:25.04px;line-height:25.04px;font-weight:400;color:#ffffff;-webkit-text-stroke:0.9px #ffffff;letter-spacing:1.78px;left:2388.6px;">Submit</div>
</body></html>
